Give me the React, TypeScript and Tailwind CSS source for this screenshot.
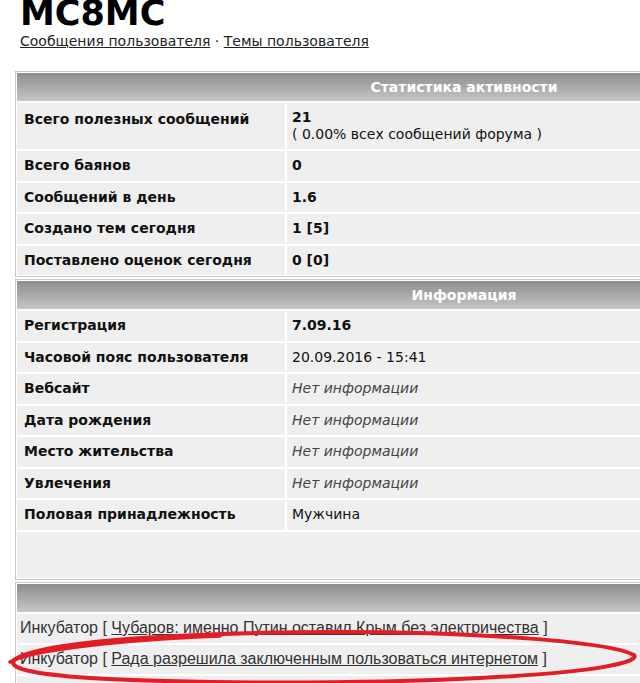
import React from 'react';

const verdana = { fontFamily: '"DejaVu Sans", Verdana, sans-serif' };

type Row = { label: string; value: React.ReactNode; tall?: boolean };

const stats: Row[] = [
  {
    label: 'Всего полезных сообщений',
    tall: true,
    value: (
      <div>
        <div className="font-bold">21</div>
        <div>( 0.00% всех сообщений форума )</div>
      </div>
    ),
  },
  { label: 'Всего баянов', value: <span className="font-bold">0</span> },
  { label: 'Сообщений в день', value: <span className="font-bold">1.6</span> },
  { label: 'Создано тем сегодня', value: <span className="font-bold">1 [5]</span> },
  { label: 'Поставлено оценок сегодня', value: <span className="font-bold">0 [0]</span> },
];

const noInfo = <span className="italic text-[#444]">Нет информации</span>;

const info: Row[] = [
  { label: 'Регистрация', value: <span className="font-bold">7.09.16</span> },
  { label: 'Часовой пояс пользователя', value: '20.09.2016 - 15:41' },
  { label: 'Вебсайт', value: noInfo },
  { label: 'Дата рождения', value: noInfo },
  { label: 'Место жительства', value: noInfo },
  { label: 'Увлечения', value: noInfo },
  { label: 'Половая принадлежность', value: 'Мужчина' },
];

const topics = [
  'Чубаров: именно Путин оставил Крым без электричества',
  'Рада разрешила заключенным пользоваться интернетом',
];

function Header({ title }: { title?: string }) {
  return (
    <div className="grid grid-cols-[270px_1fr] h-[28px] bg-gradient-to-b from-[#8e8e8e] to-[#c6c6c6]">
      <div />
      <div className="flex items-center justify-center text-[14px] font-bold text-white">{title}</div>
    </div>
  );
}

function StatTable({ title, rows, tail }: { title: string; rows: Row[]; tail?: boolean }) {
  return (
    <div className="border border-[#cacaca] bg-white p-px">
      <Header title={title} />
      <div className="grid grid-cols-[268px_1fr] gap-[2px] pt-[2px]">
        {rows.map((r) => (
          <React.Fragment key={r.label}>
            <div
              className={`bg-[#efefef] px-[7px] font-bold text-[14px] text-[#111] ${
                r.tall ? 'h-[46px] pt-[6px]' : 'h-[29.5px] flex items-center'
              }`}
            >
              {r.label}
            </div>
            <div
              className={`bg-[#efefef] px-[5px] text-[14px] text-[#111] leading-[17px] ${
                r.tall ? 'h-[46px] pt-[6px]' : 'h-[29.5px] flex items-center'
              }`}
            >
              {r.value}
            </div>
          </React.Fragment>
        ))}
        {tail && <div className="col-span-2 h-[46px] bg-[#efefef]" />}
      </div>
    </div>
  );
}

export default function App() {
  return (
    <div className="relative w-[640px] h-[683px] overflow-hidden bg-white text-[#111]" style={verdana}>
      <div className="pl-5">
        <h1 className="text-[35px] font-bold leading-none -mt-[4px] text-black">MC8MC</h1>
        <div className="text-[14px] text-[#222]">
          <a href="#" className="underline">Сообщения пользователя</a>
          <span> · </span>
          <a href="#" className="underline">Темы пользователя</a>
        </div>
      </div>

      <div className="ml-[15px] w-[628px] mt-[19px] flex flex-col gap-[2px]">
        <StatTable title="Статистика активности" rows={stats} />
        <StatTable title="Информация" rows={info} tail />

        <div className="border border-[#cacaca] bg-white p-px">
          <Header />
          <div className="flex flex-col gap-[2px] pt-[2px]">
            {topics.map((t) => (
              <div
                key={t}
                className="h-[29px] flex items-center bg-[#efefef] px-[3px] text-[16px] text-[#333]"
                style={{ fontFamily: '"Liberation Sans", Arial, sans-serif' }}
              >
                Инкубатор [&nbsp;<a href="#" className="underline">{t}</a>&nbsp;]
              </div>
            ))}
            <div className="h-[30px] bg-[#efefef]" />
          </div>
        </div>
      </div>

      {/* red hand-drawn ellipse marking the second topic */}
      <svg className="absolute left-0 top-0 pointer-events-none" width="640" height="683" viewBox="0 0 640 683">
        <path
          d="M14 660 C 40 640, 200 632, 340 632 C 480 632, 610 642, 634 655 C 640 662, 600 672, 480 678 C 360 684, 200 684, 90 678 C 30 674, 8 668, 14 660 Z"
          fill="none"
          stroke="#e21d26"
          strokeWidth="4"
          strokeLinejoin="round"
        />
        <path
          d="M10 662 C 30 650, 120 640, 220 636"
          fill="none"
          stroke="#e21d26"
          strokeWidth="3.5"
          strokeLinecap="round"
        />
      </svg>
    </div>
  );
}
